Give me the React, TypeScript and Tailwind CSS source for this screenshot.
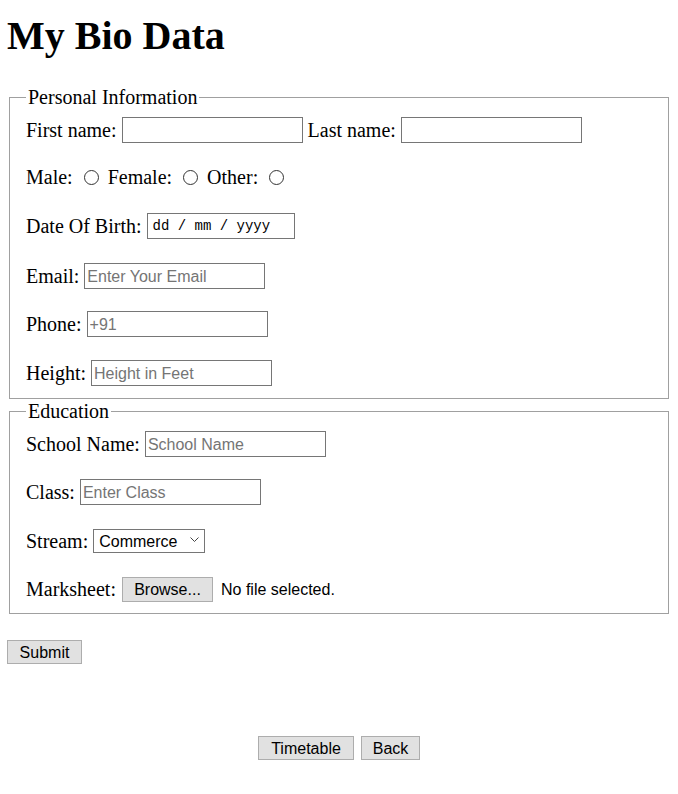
import React from 'react';

const serif = "font-['Liberation_Serif',serif]";
const sans = "font-['Liberation_Sans',Arial,sans-serif]";
const inputCls = `w-[181px] h-[26px] border border-[#767676] bg-white px-[2px] pt-[1px] text-[16px] text-black ${sans} placeholder:text-[#757575] outline-none`;
const btnCls = `h-[24px] border border-[#adadad] bg-[#e1e1e1] pt-[2px] text-[16px] leading-none text-black ${sans}`;

function Radio({ name }: { name: string }) {
    return (
        <input
            type="radio"
            name={name}
            className="appearance-none w-[15px] h-[15px] rounded-full border border-[#333] bg-white"
        />
    );
}

export default function App() {
    return (
        <div className={`min-h-[794px] bg-white px-[7px] text-black ${serif}`}>
            <h1 className="pt-[13px] text-[40px] font-bold leading-[46px]">My Bio Data</h1>

            <form className="mt-[27px]" onSubmit={(e) => e.preventDefault()}>
                {/* personal info */}
                <fieldset className="mx-[2px] border border-[#a0a0a0] px-[16px] pt-[8px] pb-[12px]">
                    <legend className="px-[2px] text-[20px] leading-[23px]">Personal Information</legend>

                    <div className="flex h-[26px] items-center gap-[5px] text-[20px]">
                        <span>First name:</span>
                        <input className={inputCls} />
                        <span>Last name:</span>
                        <input className={inputCls} />
                    </div>

                    <div className="mt-[21px] flex h-[26px] items-center text-[20px]">
                        <span>Male:</span>
                        <span className="ml-[11px] mr-[9px] flex"><Radio name="g" /></span>
                        <span>Female:</span>
                        <span className="ml-[11px] mr-[9px] flex"><Radio name="g" /></span>
                        <span>Other:</span>
                        <span className="ml-[11px] flex"><Radio name="g" /></span>
                    </div>

                    <div className="mt-[23px] flex h-[26px] items-center gap-[5px] text-[20px]">
                        <span>Date Of Birth:</span>
                        <div className="flex h-[26px] w-[148px] items-center border border-[#767676] pl-[5px] font-['Liberation_Mono',monospace] text-[14px]">
                            dd / mm / yyyy
                        </div>
                    </div>

                    <div className="mt-[24px] flex h-[26px] items-center gap-[5px] text-[20px]">
                        <span>Email:</span>
                        <input className={inputCls} placeholder="Enter Your Email" />
                    </div>

                    <div className="mt-[22px] flex h-[26px] items-center gap-[5px] text-[20px]">
                        <span>Phone:</span>
                        <input className={inputCls} placeholder="+91" />
                    </div>

                    <div className="mt-[23px] flex h-[26px] items-center gap-[5px] text-[20px]">
                        <span>Height:</span>
                        <input className={inputCls} placeholder="Height in Feet" />
                    </div>
                </fieldset>

                {/* education */}
                <fieldset className="mx-[2px] mt-[1px] border border-[#a0a0a0] px-[16px] pt-[8px] pb-[11px]">
                    <legend className="px-[2px] text-[20px] leading-[23px]">Education</legend>

                    <div className="flex h-[26px] items-center gap-[5px] text-[20px]">
                        <span>School Name:</span>
                        <input className={inputCls} placeholder="School Name" />
                    </div>

                    <div className="mt-[22px] flex h-[26px] items-center gap-[5px] text-[20px]">
                        <span>Class:</span>
                        <input className={inputCls} placeholder="Enter Class" />
                    </div>

                    <div className="mt-[23px] flex h-[26px] items-center gap-[5px] text-[20px]">
                        <span>Stream:</span>
                        <div className={`flex h-[24px] w-[112px] items-center justify-between border border-[#767676] bg-white pl-[5px] pr-[5px] pt-[1px] text-[16px] ${sans}`}>
                            <span>Commerce</span>
                            <svg width="9" height="6" viewBox="0 0 9 6" className="mb-[3px]">
                                <polyline points="0.5,0.5 4.5,4.5 8.5,0.5" fill="none" stroke="#444" strokeWidth="1" />
                            </svg>
                        </div>
                    </div>

                    <div className="mt-[22px] flex h-[26px] items-center text-[20px]">
                        <span>Marksheet:</span>
                        <button type="button" className={`${btnCls} ml-[6px] h-[25px] w-[91px]`}>Browse...</button>
                        <span className={`ml-[8px] pt-[1px] text-[16px] ${sans}`}>No file selected.</span>
                    </div>
                </fieldset>

                <button type="submit" className={`${btnCls} mt-[26px] w-[75px]`}>Submit</button>
            </form>

            <div className="mt-[71px] flex justify-center gap-[7px]">
                <button type="button" className={`${btnCls} w-[96px]`}>Timetable</button>
                <button type="button" className={`${btnCls} w-[59px]`}>Back</button>
            </div>
        </div>
    );
}
